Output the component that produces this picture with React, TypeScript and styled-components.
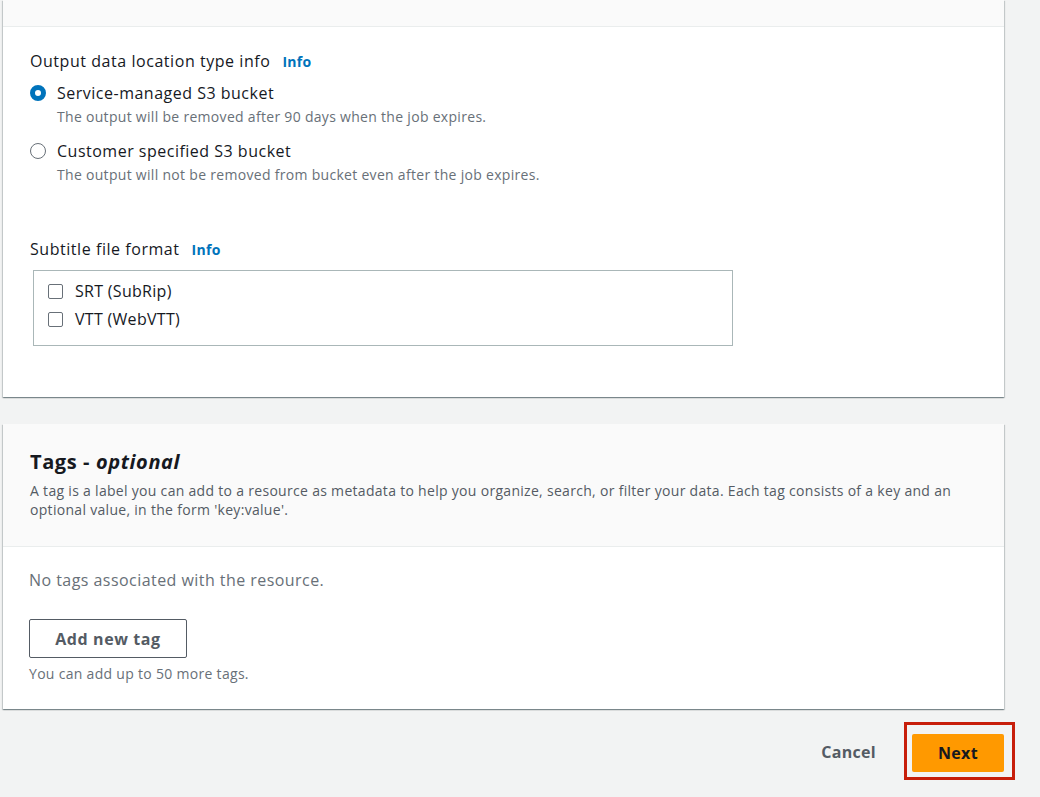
import * as React from 'react';
import styled, { createGlobalStyle } from 'styled-components';

const GlobalStyle = createGlobalStyle`
  html, body {
    margin: 0;
    padding: 0;
    background: #f2f3f3;
  }
  body {
    font-family: "Open Sans", "Noto Sans", Arial, sans-serif;
    color: #16191f;
    -webkit-font-smoothing: antialiased;
  }
`;

// Layout
const Page = styled.div`
  width: 1040px;
  height: 797px;
  overflow: hidden;
  box-sizing: border-box;
  padding: 0 36px 0 3px;
  display: flex;
  flex-direction: column;
`;

const Card = styled.section<{ $gapTop?: number }>`
  background: #ffffff;
  margin-top: ${(p) => p.$gapTop ?? 0}px;
  box-shadow: 0 1px 1px 0 rgba(0, 28, 36, 0.3), 1px 1px 1px 0 rgba(0, 28, 36, 0.15),
    -1px 1px 1px 0 rgba(0, 28, 36, 0.15);
`;

const CardHeader = styled.div<{ $height?: number }>`
  background: #fafafa;
  border-bottom: 1px solid #eaeded;
  box-sizing: border-box;
  padding: ${(p) => (p.$height ? '0' : '24px 30px 27px 27px')};
  height: ${(p) => (p.$height ? `${p.$height}px` : 'auto')};
`;

const CardBody = styled.div<{ $pad: string }>`
  padding: ${(p) => p.$pad};
  display: flex;
  flex-direction: column;
`;

// Form parts
const FieldLabel = styled.div<{ $top?: number }>`
  display: flex;
  align-items: baseline;
  gap: 12px;
  font-size: 16px;
  line-height: 22px;
  letter-spacing: 0.55px;
  margin-top: ${(p) => p.$top ?? 0}px;
`;

const InfoLink = styled.a`
  font-size: 14px;
  font-weight: 700;
  letter-spacing: 0.3px;
  color: #0073bb;
  text-decoration: none;
`;

const RadioRow = styled.label<{ $top: number }>`
  display: flex;
  align-items: center;
  gap: 11px;
  font-size: 16px;
  line-height: 22px;
  letter-spacing: 0.5px;
  margin-top: ${(p) => p.$top}px;
`;

const RadioDot = styled.span<{ $checked?: boolean }>`
  width: 16px;
  height: 16px;
  box-sizing: border-box;
  border-radius: 50%;
  flex-shrink: 0;
  background: #ffffff;
  border: ${(p) => (p.$checked ? '5px solid #0073bb' : '1.5px solid #687078')};
`;

const Hint = styled.div<{ $indent?: number; $top?: number }>`
  font-size: 14px;
  line-height: 20px;
  letter-spacing: 0.3px;
  color: #687078;
  margin-left: ${(p) => p.$indent ?? 0}px;
  margin-top: ${(p) => p.$top ?? 0}px;
`;

const CheckGroup = styled.div`
  width: 700px;
  box-sizing: border-box;
  margin-top: 9px;
  margin-left: 3px;
  border: 1px solid #aab7b8;
  padding: 6px 14px 12px;
`;

const CheckRow = styled.label`
  display: flex;
  align-items: center;
  gap: 12px;
  font-size: 16px;
  line-height: 28px;
  letter-spacing: 0.3px;
`;

const CheckBox = styled.span`
  width: 15px;
  height: 15px;
  box-sizing: border-box;
  border: 1px solid #687078;
  border-radius: 2px;
  background: #ffffff;
`;

// Tags card
const Title = styled.h2`
  margin: 0;
  font-size: 20px;
  line-height: 28px;
  font-weight: 700;
  letter-spacing: 0.6px;
  em {
    font-style: italic;
  }
`;

const Description = styled.p`
  margin: 5px 0 0;
  font-size: 14px;
  line-height: 19px;
  letter-spacing: 0.3px;
  color: #545b64;
`;

const EmptyText = styled.div`
  font-size: 16px;
  line-height: 22px;
  letter-spacing: 0.45px;
  color: #687078;
`;

const OutlineButton = styled.button`
  align-self: flex-start;
  margin-top: 28px;
  height: 39px;
  width: 158px;
  box-sizing: border-box;
  background: #ffffff;
  border: 1px solid #545b64;
  border-radius: 2px;
  font-family: inherit;
  font-size: 16px;
  font-weight: 700;
  letter-spacing: 0.6px;
  color: #545b64;
  cursor: pointer;
`;

// Footer
const Footer = styled.div`
  display: flex;
  justify-content: flex-end;
  align-items: center;
  margin-top: 13px;
  margin-right: -11px;
  gap: 28px;
`;

const LinkButton = styled.button`
  background: none;
  border: none;
  padding: 0;
  font-family: inherit;
  font-size: 16px;
  font-weight: 700;
  letter-spacing: 0.3px;
  color: #545b64;
  cursor: pointer;
  margin-top: 2px;
`;

const Highlight = styled.div`
  border: 3px solid #c71e0a;
  padding: 9px 8px 5px 5px;
`;

const PrimaryButton = styled.button`
  width: 92px;
  height: 38px;
  background: #ff9900;
  border: none;
  border-radius: 2px;
  font-family: inherit;
  font-size: 16px;
  font-weight: 700;
  letter-spacing: 0.3px;
  color: #16191f;
  cursor: pointer;
`;

export default function App() {
  return (
    <>
      <GlobalStyle />
      <Page>
        <Card>
          <CardHeader $height={27} />
          <CardBody $pad="23px 30px 51px 27px">
            <FieldLabel>
              Output data location type info <InfoLink>Info</InfoLink>
            </FieldLabel>
            <RadioRow $top={9}>
              <RadioDot $checked />
              Service-managed S3 bucket
            </RadioRow>
            <Hint $indent={27} $top={3}>
              The output will be removed after 90 days when the job expires.
            </Hint>
            <RadioRow $top={13}>
              <RadioDot />
              Customer specified S3 bucket
            </RadioRow>
            <Hint $indent={27} $top={3}>
              The output will not be removed from bucket even after the job expires.
            </Hint>
            <FieldLabel $top={53}>
              Subtitle file format <InfoLink>Info</InfoLink>
            </FieldLabel>
            <CheckGroup>
              <CheckRow>
                <CheckBox />
                SRT (SubRip)
              </CheckRow>
              <CheckRow>
                <CheckBox />
                VTT (WebVTT)
              </CheckRow>
            </CheckGroup>
          </CardBody>
        </Card>

        <Card $gapTop={27}>
          <CardHeader>
            <Title>
              Tags - <em>optional</em>
            </Title>
            <Description>
              A tag is a label you can add to a resource as metadata to help you organize, search, or
              filter your data. Each tag consists of a key and an optional value, in the form
              'key:value'.
            </Description>
          </CardHeader>
          <CardBody $pad="22px 30px 25px 26px">
            <EmptyText>No tags associated with the resource.</EmptyText>
            <OutlineButton>Add new tag</OutlineButton>
            <Hint $top={6}>You can add up to 50 more tags.</Hint>
          </CardBody>
        </Card>

        <Footer>
          <LinkButton>Cancel</LinkButton>
          <Highlight>
            <PrimaryButton>Next</PrimaryButton>
          </Highlight>
        </Footer>
      </Page>
    </>
  );
}
